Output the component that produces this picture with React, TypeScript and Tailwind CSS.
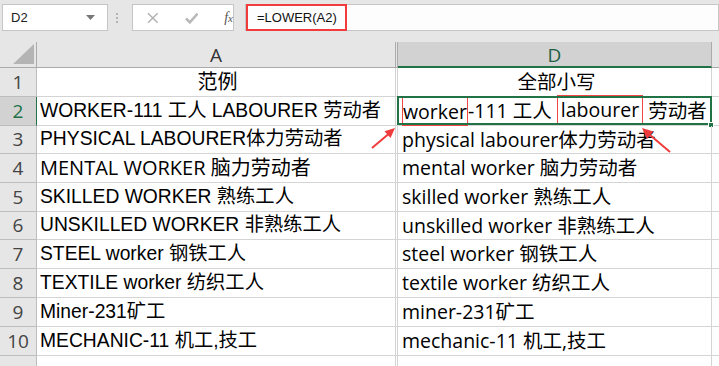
import React from 'react';

type Row = { n: number; a: string; d: React.ReactNode; h: string; thin?: boolean; center?: boolean };

const rows: Row[] = [
  { n: 1, a: '范例', d: '全部小写', h: 'h-[29px]', thin: true, center: true },
  {
    n: 2,
    a: 'WORKER-111 工人 LABOURER 劳动者',
    d: (
      <>
        <span className="relative top-[1px] border border-[#f04848]">worker</span>-111 工人{' '}
        <span className="relative -top-[1px] border border-[#f04848] px-[3px]">labourer</span> 劳动者
      </>
    ),
    h: 'h-[29px]',
  },
  { n: 3, a: 'PHYSICAL LABOURER体力劳动者', d: 'physical labourer体力劳动者', h: 'h-[28px]' },
  { n: 4, a: 'MENTAL WORKER 脑力劳动者', d: 'mental worker 脑力劳动者', h: 'h-[29px]', thin: true },
  { n: 5, a: 'SKILLED WORKER 熟练工人', d: 'skilled worker 熟练工人', h: 'h-[29px]' },
  { n: 6, a: 'UNSKILLED WORKER 非熟练工人', d: 'unskilled worker 非熟练工人', h: 'h-[28px]' },
  { n: 7, a: 'STEEL worker 钢铁工人', d: 'steel worker 钢铁工人', h: 'h-[29px]' },
  { n: 8, a: 'TEXTILE worker 纺织工人', d: 'textile worker 纺织工人', h: 'h-[29px]' },
  { n: 9, a: 'Miner-231矿工', d: 'miner-231矿工', h: 'h-[29px]' },
  { n: 10, a: 'MECHANIC-11 机工,技工', d: 'mechanic-11 机工,技工', h: 'h-[29px]' },
];

const arial = 'font-[family-name:Liberation_Sans,Noto_Sans_CJK_SC,sans-serif] text-[19.3px]';
const deng = 'font-[family-name:Open_Sans,Noto_Sans_CJK_SC,sans-serif] font-normal';

function FormulaBar() {
  return (
    <div className="flex h-[42px] items-start pt-[4px] bg-[#e6e6e6]">
      <div className="ml-[2px] flex h-[27px] w-[106px] items-center justify-between border border-[#c6c6c6] bg-white pl-[8px] pr-[12px]">
        <span className="font-[family-name:Liberation_Sans,sans-serif] text-[13px] text-[#222]">D2</span>
        <svg width="9" height="5" viewBox="0 0 9 5">
          <path d="M0 0h9L4.5 5z" fill="#777" />
        </svg>
      </div>
      <div className="mx-[8px] flex h-[27px] flex-col items-center justify-center gap-[2px]">
        <span className="h-[2px] w-[2px] bg-[#b4b4b4]" />
        <span className="h-[2px] w-[2px] bg-[#b4b4b4]" />
        <span className="h-[2px] w-[2px] bg-[#b4b4b4]" />
      </div>
      <div className="ml-[6px] flex h-[27px] w-[102px] items-center border border-[#c6c6c6] bg-white">
        <svg className="ml-[14px]" width="12" height="12" viewBox="0 0 12 12">
          <path d="M1 1l10 10M11 1L1 11" stroke="#b0b0b0" strokeWidth="1.4" />
        </svg>
        <svg className="ml-[26px]" width="14" height="12" viewBox="0 0 14 12">
          <path d="M1 6.5l4 4L13 1.5" stroke="#b8b8b8" strokeWidth="2.6" fill="none" />
        </svg>
        <span className="ml-[26px] font-[family-name:Liberation_Serif,serif] text-[14px] italic text-[#555]">
          f<span className="text-[11px]">x</span>
        </span>
      </div>
      <div className="ml-[11px] flex h-[27px] flex-1 items-center border border-[#c6c6c6] bg-[#fdfdfd]">
        <div className="flex h-[27px] w-[101px] items-center border-2 border-[#f23c3c] pl-[9px] font-[family-name:Liberation_Sans,sans-serif] text-[13px] text-[#111]">
          =LOWER(A2)
        </div>
      </div>
    </div>
  );
}

function HeaderRow() {
  return (
    <div className={`flex h-[26px] bg-[#e6e6e6] ${deng} text-[19px]`}>
      <div className="flex w-[37px] items-end justify-end border-r border-b border-[#ababab] pb-[3px] pr-[2px]">
        <svg width="21" height="20" viewBox="0 0 21 20">
          <path d="M21 0V20H0z" fill="#b4b4b4" />
        </svg>
      </div>
      <div className="flex w-[359px] items-center justify-center border-r border-b border-[#ababab] pt-[2px] text-[#333] leading-none">
        A
      </div>
      <div className="w-[2px] border-r border-b border-[#ababab]" />
      <div className="flex w-[314px] items-center justify-center border-r border-b-2 border-r-[#ababab] border-b-[#217346] bg-[#d2d2d2] pt-[2px] leading-none text-[#1f5f44]">
        D
      </div>
      <div className="flex-1 border-b border-[#ababab]" />
    </div>
  );
}

function SheetRow({ r }: { r: Row }) {
  const sel = r.n === 2;
  return (
    <div className={`flex ${r.h}`}>
      <div
        className={`flex w-[37px] items-center justify-center border-r border-b ${deng} text-[19px] leading-none ${
          sel ? 'border-r-[#217346] border-b-[#bdbdbd] bg-[#d2d2d2] text-[#217346]' : 'border-[#bdbdbd] bg-[#e6e6e6] text-[#444]'
        }`}
      >
        {r.n}
      </div>
      <div
        className={`flex w-[359px] items-center whitespace-nowrap border-r border-b border-[#d4d4d4] pl-[3px] text-black ${
          r.thin ? `${deng} text-[20px]` : arial
        } ${r.center ? 'justify-center' : ''}`}
      >
        {r.a}
      </div>
      <div className="w-[2px] border-r border-b border-[#d4d4d4]" />
      <div
        className={`relative flex w-[314px] items-center whitespace-nowrap border-r border-b border-[#d4d4d4] pl-[4px] text-[19.5px] text-black ${deng} ${
          r.center ? 'justify-center' : ''
        }`}
      >
        <span>{r.d}</span>
        {sel && (
          <>
            <div className="pointer-events-none absolute -left-[1px] -top-[1px] -right-[1px] bottom-0 border-2 border-[#217346]" />
            <div className="absolute -right-[3px] -bottom-[3px] h-[6px] w-[6px] border border-white bg-[#217346]" />
          </>
        )}
      </div>
      <div className="flex-1 border-b border-[#d4d4d4]" />
    </div>
  );
}

export default function App() {
  return (
    <div className="relative h-[366px] w-[719px] overflow-hidden bg-white">
      <FormulaBar />
      <HeaderRow />
      {rows.map((r) => (
        <SheetRow key={r.n} r={r} />
      ))}
      <div className="flex h-[20px]">
        <div className="w-[37px] border-r border-[#bdbdbd] bg-[#e6e6e6]" />
        <div className="w-[359px] border-r border-[#d4d4d4]" />
        <div className="w-[2px] border-r border-[#d4d4d4]" />
        <div className="w-[314px] border-r border-[#d4d4d4]" />
      </div>
      <svg className="pointer-events-none absolute left-0 top-0" width="719" height="366">
        <line x1="372" y1="148" x2="388" y2="134.5" stroke="#ee3b3b" strokeWidth="2" />
        <polygon points="395,128 390.5,138 384.5,131.2" fill="#ee3b3b" />
        <line x1="670" y1="152" x2="650" y2="135" stroke="#ee3b3b" strokeWidth="2" />
        <polygon points="642,128 653.5,131.5 647,139" fill="#ee3b3b" />
      </svg>
    </div>
  );
}
